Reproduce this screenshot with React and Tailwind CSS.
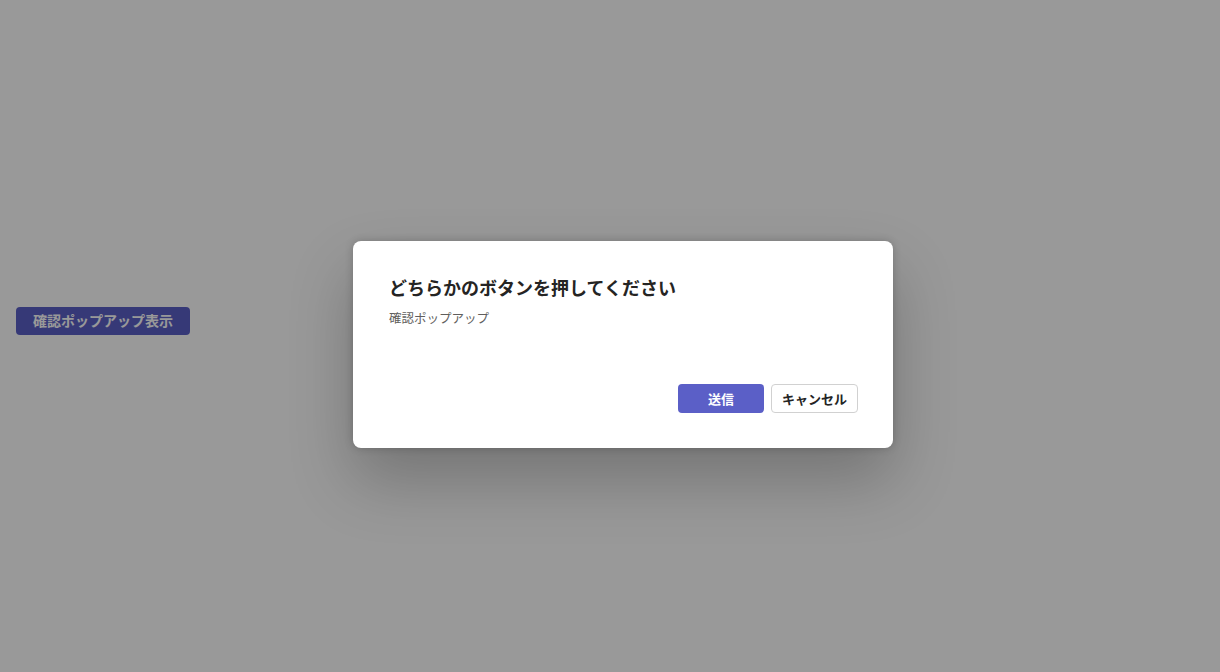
export default function App() {
  const font = { fontFamily: '"Noto Sans CJK JP", "Noto Sans", sans-serif' };
  return (
    <div className="relative w-[1220px] h-[672px] bg-white overflow-hidden" style={font}>
      <div className="pt-[307px] pl-4">
        <button className="h-[28px] px-[17px] pb-[2px] rounded-[4px] bg-[#5b5fc7] text-white text-[14px] font-bold leading-none">
          確認ポップアップ表示
        </button>
      </div>
      <div className="absolute inset-0 bg-black/40" />
      <div className="absolute left-[353px] top-[241px] w-[540px] h-[207px] bg-white rounded-[8px] shadow-[0_32px_64px_rgba(0,0,0,0.24),0_0_8px_rgba(0,0,0,0.2)] pl-[36px] pr-[35px] pt-[34px] pb-[35px] flex flex-col">
        <h2 className="text-[18px] font-bold leading-[24px] text-[#252423]">どちらかのボタンを押してください</h2>
        <p className="mt-[10px] text-[12.5px] leading-[18px] text-[#605e5c]">確認ポップアップ</p>
        <div className="mt-auto flex justify-end gap-[7px]">
          <button className="w-[86px] h-[29px] pb-[1px] rounded-[4px] bg-[#5b5fc7] text-white text-[13px] font-bold leading-none">送信</button>
          <button className="w-[87px] h-[29px] pb-[1px] rounded-[4px] bg-white border border-[#d1d1d1] text-[#242424] text-[13px] font-bold leading-none">キャンセル</button>
        </div>
      </div>
    </div>
  );
}
